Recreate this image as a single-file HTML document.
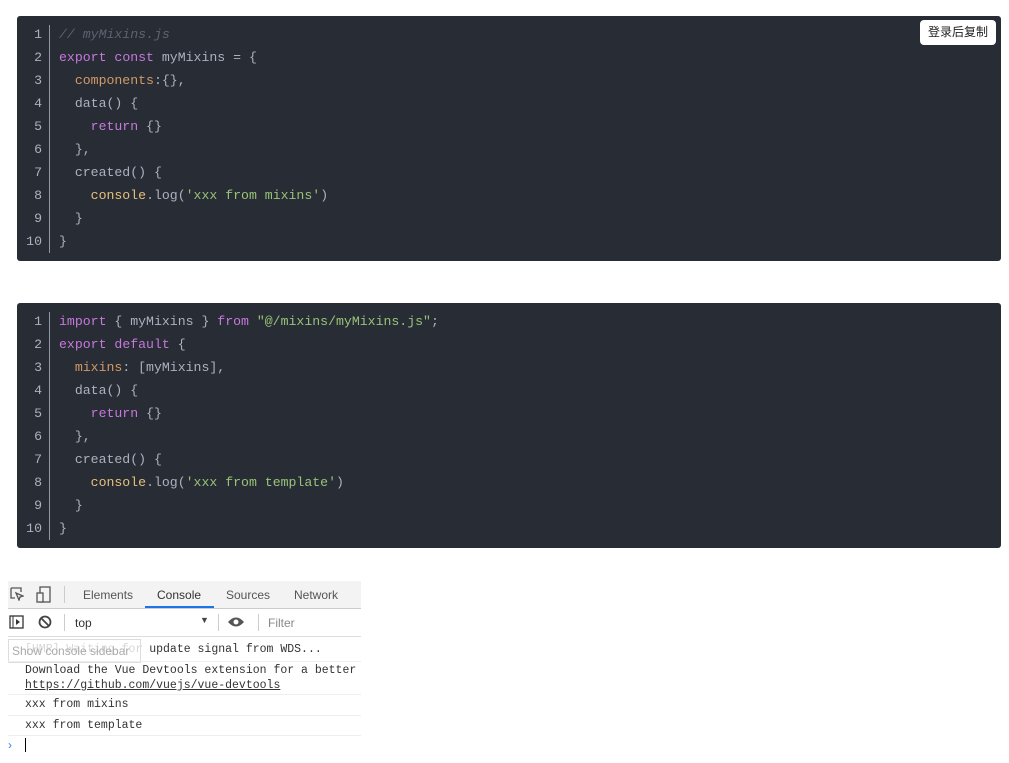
<!DOCTYPE html>
<html><head><meta charset="utf-8"><style>
body{margin:0;background:#fff;width:1009px;height:763px;overflow:hidden;position:relative;font-family:"Liberation Sans","Noto Sans CJK SC",sans-serif}
.code{position:absolute;left:17px;width:984px;height:245px;background:#282c34;border-radius:3px}
.ln{position:absolute;left:0;top:7px;width:25px;text-align:right;color:#abb2bf;font:13.2px/23px "Liberation Mono",monospace}
.sep{position:absolute;left:32px;top:9px;width:1px;height:228px;background:#abb2bf;opacity:.8}
pre{position:absolute;left:42px;top:7px;margin:0;color:#abb2bf;font:13.2px/23px "Liberation Mono",monospace}
.k{color:#c678dd}.o{color:#d19a66}.c{color:#5c6370;font-style:italic}.s{color:#98c379}.y{color:#e5c07b}
.btn{position:absolute;left:920px;top:20px;width:76px;height:25px;background:#fff;border-radius:4px;font-size:12px;line-height:25px;text-align:center;color:#222}
.dt{position:absolute;left:8px;top:581px;width:353px;height:174px;background:#fff;font-family:"Liberation Sans",sans-serif;font-size:12px;color:#333}
.tabs{height:27px;background:#f3f3f3;border-bottom:1px solid #ccc;position:relative}
.tab{position:absolute;top:7px;color:#555}
.bar{height:27px;border-bottom:1px solid #ddd;position:relative;background:#fff}
.m{font-family:"Liberation Mono",monospace;font-size:11.5px;color:#333;position:absolute;left:17px;white-space:nowrap}
.row{position:absolute;left:0;width:353px;border-top:1px solid #eee}
</style></head><body>
<div class="code" style="top:16px">
<div class="ln">1<br>2<br>3<br>4<br>5<br>6<br>7<br>8<br>9<br>10</div><div class="sep"></div>
<pre><span class="c">// myMixins.js</span>
<span class="k">export</span> <span class="k">const</span> myMixins = {
  <span class="o">components</span>:{},
  data() {
    <span class="k">return</span> {}
  },
  created() {
    <span class="y">console</span>.log(<span class="s">'xxx from mixins'</span>)
  }
}</pre>
</div>
<div class="btn">登录后复制</div>
<div class="code" style="top:303px">
<div class="ln">1<br>2<br>3<br>4<br>5<br>6<br>7<br>8<br>9<br>10</div><div class="sep"></div>
<pre><span class="k">import</span> { myMixins } <span class="k">from</span> <span class="s">"@/mixins/myMixins.js"</span>;
<span class="k">export</span> <span class="k">default</span> {
  <span class="o">mixins</span>: [myMixins],
  data() {
    <span class="k">return</span> {}
  },
  created() {
    <span class="y">console</span>.log(<span class="s">'xxx from template'</span>)
  }
}</pre>
</div>
<div class="dt">
<div class="tabs">
<svg style="position:absolute;left:2px;top:6px" width="14" height="14"><path d="M1 1h10v4M1 1v10h4M6 6l7 3-3 1-1 3z" fill="none" stroke="#555" stroke-width="1.3"/></svg>
<svg style="position:absolute;left:28px;top:5px" width="16" height="17"><rect x="4" y="1" width="10" height="15" fill="none" stroke="#555" stroke-width="1.3"/><rect x="1" y="7" width="6" height="9" fill="#f3f3f3" stroke="#555" stroke-width="1.3"/></svg>
<div style="position:absolute;left:56px;top:5px;width:1px;height:17px;background:#ccc"></div>
<span class="tab" style="left:75px">Elements</span>
<span class="tab" style="left:149px;color:#333">Console</span>
<div style="position:absolute;left:137px;top:25px;width:69px;height:2px;background:#1a73e8"></div>
<span class="tab" style="left:218px">Sources</span>
<span class="tab" style="left:286px">Network</span>
</div>
<div class="bar">
<svg style="position:absolute;left:1px;top:6px" width="15" height="14"><rect x="1" y="1" width="13" height="12" fill="none" stroke="#333" stroke-width="1.3"/><path d="M4 1v12" stroke="#333"/><path d="M7 4l4 3-4 3z" fill="#333"/></svg>
<svg style="position:absolute;left:30px;top:6px" width="14" height="14"><circle cx="7" cy="7" r="5.5" fill="none" stroke="#444" stroke-width="1.8"/><path d="M3 3l8 8" stroke="#444" stroke-width="1.8"/></svg>
<div style="position:absolute;left:56px;top:5px;width:1px;height:17px;background:#ccc"></div>
<span style="position:absolute;left:67px;top:7px">top</span>
<span style="position:absolute;left:192px;top:6px;font-size:9px;color:#444">▼</span>
<div style="position:absolute;left:210px;top:5px;width:1px;height:17px;background:#ccc"></div>
<svg style="position:absolute;left:219px;top:7px" width="18" height="12"><path d="M1 6Q9-3 17 6Q9 15 1 6z" fill="#555"/><circle cx="9" cy="6" r="2.5" fill="#fff"/></svg>
<div style="position:absolute;left:250px;top:5px;width:1px;height:17px;background:#ccc"></div>
<span style="position:absolute;left:260px;top:7px;color:#888">Filter</span>
</div>
<span class="m" style="top:62px">[HMR] Waiting for update signal from WDS...</span>
<div style="position:absolute;left:0;top:58px;width:128px;height:22px;background:rgba(255,255,255,.8);border:1px solid #ddd;color:#aaa;font-size:12px;line-height:22px;padding-left:3px">Show console sidebar</div>
<div class="row" style="top:80px"></div>
<span class="m" style="top:83px">Download the Vue Devtools extension for a better</span>
<span class="m" style="top:98px;text-decoration:underline">https://github.com/vuejs/vue-devtools</span>
<div class="row" style="top:113px"></div>
<span class="m" style="top:117px">xxx from mixins</span>
<div class="row" style="top:134px"></div>
<span class="m" style="top:138px">xxx from template</span>
<div class="row" style="top:154px"></div>
<span style="position:absolute;left:0;top:157px;color:#367cf1;font-size:12px">›</span>
<div style="position:absolute;left:17px;top:157px;width:1px;height:14px;background:#000"></div>
</div>
</body></html>
